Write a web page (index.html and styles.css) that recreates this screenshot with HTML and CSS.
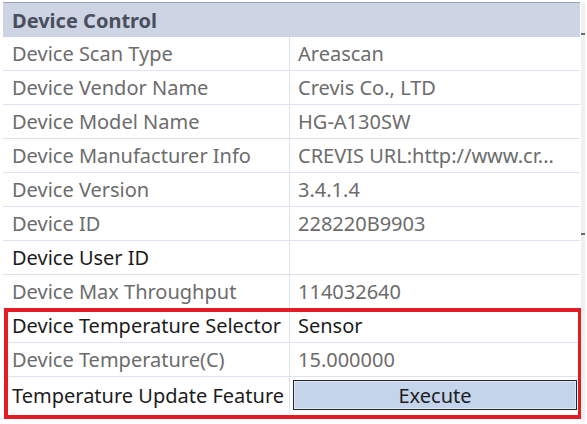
FILE: index.html
```html
<!DOCTYPE html>
<html>
<head>
<meta charset="utf-8">
<link rel="stylesheet" href="styles.css">
</head>
<body>
<div class="page">
  <div class="grid">
    <div class="header">Device Control</div>
    <div class="row ro"><div class="k">Device Scan Type</div><div class="v">Areascan</div></div>
    <div class="row ro"><div class="k">Device Vendor Name</div><div class="v">Crevis Co., LTD</div></div>
    <div class="row ro"><div class="k">Device Model Name</div><div class="v">HG-A130SW</div></div>
    <div class="row ro"><div class="k">Device Manufacturer Info</div><div class="v">CREVIS URL:http://www.cr...</div></div>
    <div class="row ro"><div class="k">Device Version</div><div class="v">3.4.1.4</div></div>
    <div class="row ro"><div class="k">Device ID</div><div class="v">228220B9903</div></div>
    <div class="row"><div class="k">Device User ID</div><div class="v"></div></div>
    <div class="row ro"><div class="k">Device Max Throughput</div><div class="v">114032640</div></div>
    <div class="hl">
      <div class="row"><div class="k">Device Temperature Selector</div><div class="v">Sensor</div></div>
      <div class="row ro"><div class="k">Device Temperature(C)</div><div class="v">15.000000</div></div>
      <div class="row last"><div class="k">Temperature Update Feature</div><div class="v"><div class="btn">Execute</div></div></div>
    </div>
  </div>
  <div class="scroll">
    <span class="tick t1"></span>
    <span class="tick t2"></span>
  </div>
</div>
</body>
</html>
```

FILE: styles.css
```css
html, body {
  margin: 0;
  padding: 0;
  background: #ffffff;
}
body {
  font-family: "Noto Sans", "Open Sans", sans-serif;
  font-size: 20px;
  color: #1c1c1c;
}
.page {
  display: flex;
  padding-top: 2px;
  padding-left: 3px;
}
.grid {
  width: 577px;
  border-top: 1px solid #9da3bd;
}
.header {
  height: 34px;
  box-sizing: border-box;
  background: #cdd4e3;
  color: #4a4f5d;
  font-weight: bold;
  display: flex;
  align-items: center;
  padding-left: 9px;
}
.row {
  display: grid;
  grid-template-columns: 287px 1fr;
  height: 34px;
  box-sizing: border-box;
  border-bottom: 1px solid #dde2ee;
}
.row.last {
  height: 36px;
  border-bottom: none;
}
.k {
  border-right: 1px solid #dde2ee;
  padding-left: 9px;
  display: flex;
  align-items: center;
  white-space: nowrap;
  overflow: hidden;
}
.v {
  padding-left: 8px;
  display: flex;
  align-items: center;
  white-space: nowrap;
  overflow: hidden;
}
.ro .k, .ro .v {
  color: #6c6c6c;
}
.last .v {
  padding: 3px 3px 3px 3px;
}
.btn {
  flex: 1;
  height: 30px;
  box-sizing: border-box;
  background: #c4d4ea;
  border: 1px solid #262626;
  box-shadow: inset 0 0 0 1px #dfe8f5;
  display: flex;
  align-items: center;
  justify-content: center;
  color: #1e1e1e;
}
.hl {
  position: relative;
}
.hl::after {
  content: "";
  position: absolute;
  top: -1px;
  left: 1px;
  right: -2px;
  bottom: -6px;
  border: 4px solid #e31c26;
  pointer-events: none;
}
.scroll {
  width: 4px;
  margin-left: 1px;
  height: 420px;
  background: #f0f0f0;
  position: relative;
}
.tick {
  position: absolute;
  left: 0;
  width: 4px;
  height: 2px;
  background: #6a6a6a;
}
.t1 { top: 31px; }
.t2 { top: 231px; }
```
